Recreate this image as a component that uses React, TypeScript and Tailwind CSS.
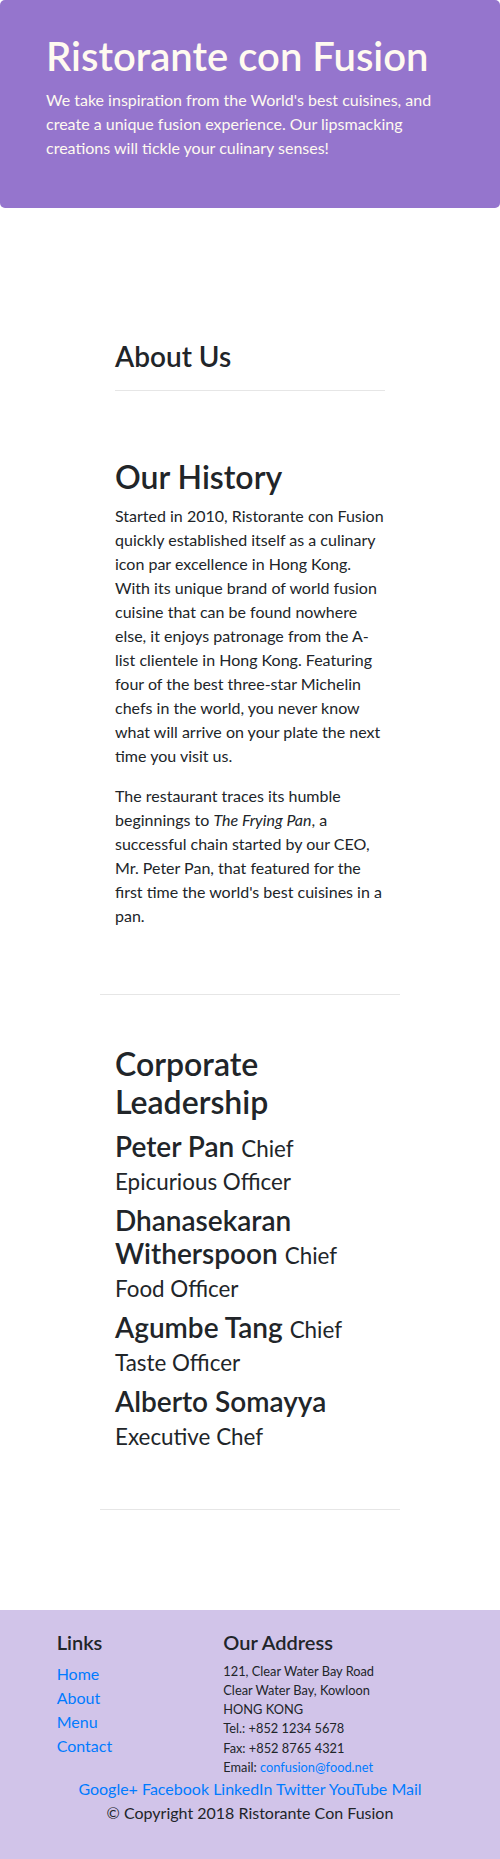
import React from "react";

const Lines = ({ lines }: { lines: React.ReactNode[] }) => (
  <>
    {lines.map((l, i) => (
      <React.Fragment key={i}>
        <span className="whitespace-nowrap">{l}</span>
        {i < lines.length - 1 && <br />}
      </React.Fragment>
    ))}
  </>
);

const leaders: { name: React.ReactNode; title: React.ReactNode }[] = [
  { name: "Peter Pan", title: <>Chief<br />Epicurious Officer</> },
  { name: <>Dhanasekaran<br />Witherspoon</>, title: <>Chief<br />Food Officer</> },
  { name: "Agumbe Tang", title: <>Chief<br />Taste Officer</> },
  { name: <>Alberto Somayya<br /></>, title: <>Executive Chef</> },
];

export default function App() {
  return (
    <div className="font-[family-name:Lato,sans-serif] text-[#212529] bg-white w-[500px]">
      {/* Jumbotron */}
      <div className="bg-[#9575CD] text-[#FFFAF0] rounded-[5px] px-[46px] py-8 mb-8">
        <h1 className="text-[40px] leading-[1.2] font-semibold mb-2">Ristorante con Fusion</h1>
        <p className="text-base leading-6 mb-4">
          <Lines
            lines={[
              "We take inspiration from the World's best cuisines, and",
              "create a unique fusion experience. Our lipsmacking",
              "creations will tickle your culinary senses!",
            ]}
          />
        </p>
      </div>

      {/* Main container */}
      <div className="w-[300px] mx-auto">
        <div className="px-[15px] pt-[100px]">
          <h3 className="text-[28px] leading-[1.2] font-semibold mb-4">About Us</h3>
          <div className="border-t border-[#e6e6e6] mt-4" />
        </div>

        <div className="px-[15px] pt-[67px] pb-[50px] border-b border-[#e6e6e6]">
          <h2 className="text-[32px] leading-[1.2] font-semibold mb-2">Our History</h2>
          <p className="text-base leading-6 mb-4">
            <Lines
              lines={[
                "Started in 2010, Ristorante con Fusion",
                "quickly established itself as a culinary",
                "icon par excellence in Hong Kong.",
                "With its unique brand of world fusion",
                "cuisine that can be found nowhere",
                "else, it enjoys patronage from the A-",
                "list clientele in Hong Kong. Featuring",
                "four of the best three-star Michelin",
                "chefs in the world, you never know",
                "what will arrive on your plate the next",
                "time you visit us.",
              ]}
            />
          </p>
          <p className="text-base leading-6 mb-4">
            <Lines
              lines={[
                "The restaurant traces its humble",
                <>beginnings to <em>The Frying Pan</em>, a</>,
                "successful chain started by our CEO,",
                "Mr. Peter Pan, that featured for the",
                "first time the world's best cuisines in a",
                "pan.",
              ]}
            />
          </p>
        </div>

        <div className="px-[15px] pt-[50px] pb-[50px] border-b border-[#e6e6e6]">
          <h2 className="text-[32px] leading-[1.2] font-semibold mb-2">
            Corporate
            <br />
            Leadership
          </h2>
          {leaders.map((l, i) => (
            <h3 key={i} className="text-[28px] leading-[33px] font-semibold mb-2">
              {l.name}{" "}
              <small className="text-[22.4px] leading-[26px] font-normal">{l.title}</small>
            </h3>
          ))}
        </div>
      </div>

      {/* Footer */}
      <footer className="bg-[#D1C4E9] mt-[100px] pt-5 pb-5">
        <div className="flex">
          <div className="ml-[41.67px] w-[166.67px] px-[15px]">
            <h5 className="text-[20px] leading-[1.2] font-semibold mb-2">Links</h5>
            <ul className="text-base leading-6 text-[#007bff]">
              <li>Home</li>
              <li>About</li>
              <li>Menu</li>
              <li>Contact</li>
            </ul>
          </div>
          <div className="w-[291.67px] px-[15px]">
            <h5 className="text-[20px] leading-[1.2] font-semibold mb-2">Our Address</h5>
            <address className="not-italic text-[12.8px] leading-[19.2px]">
              121, Clear Water Bay Road
              <br />
              Clear Water Bay, Kowloon
              <br />
              HONG KONG
              <br />
              Tel.: +852 1234 5678
              <br />
              Fax: +852 8765 4321
              <br />
              Email: <span className="text-[#007bff]">confusion@food.net</span>
            </address>
          </div>
        </div>
        <div className="text-center text-base leading-6 text-[#007bff]">
          Google+ Facebook LinkedIn Twitter YouTube Mail
        </div>
        <p className="text-center text-base leading-6 mb-4">© Copyright 2018 Ristorante Con Fusion</p>
      </footer>
    </div>
  );
}
